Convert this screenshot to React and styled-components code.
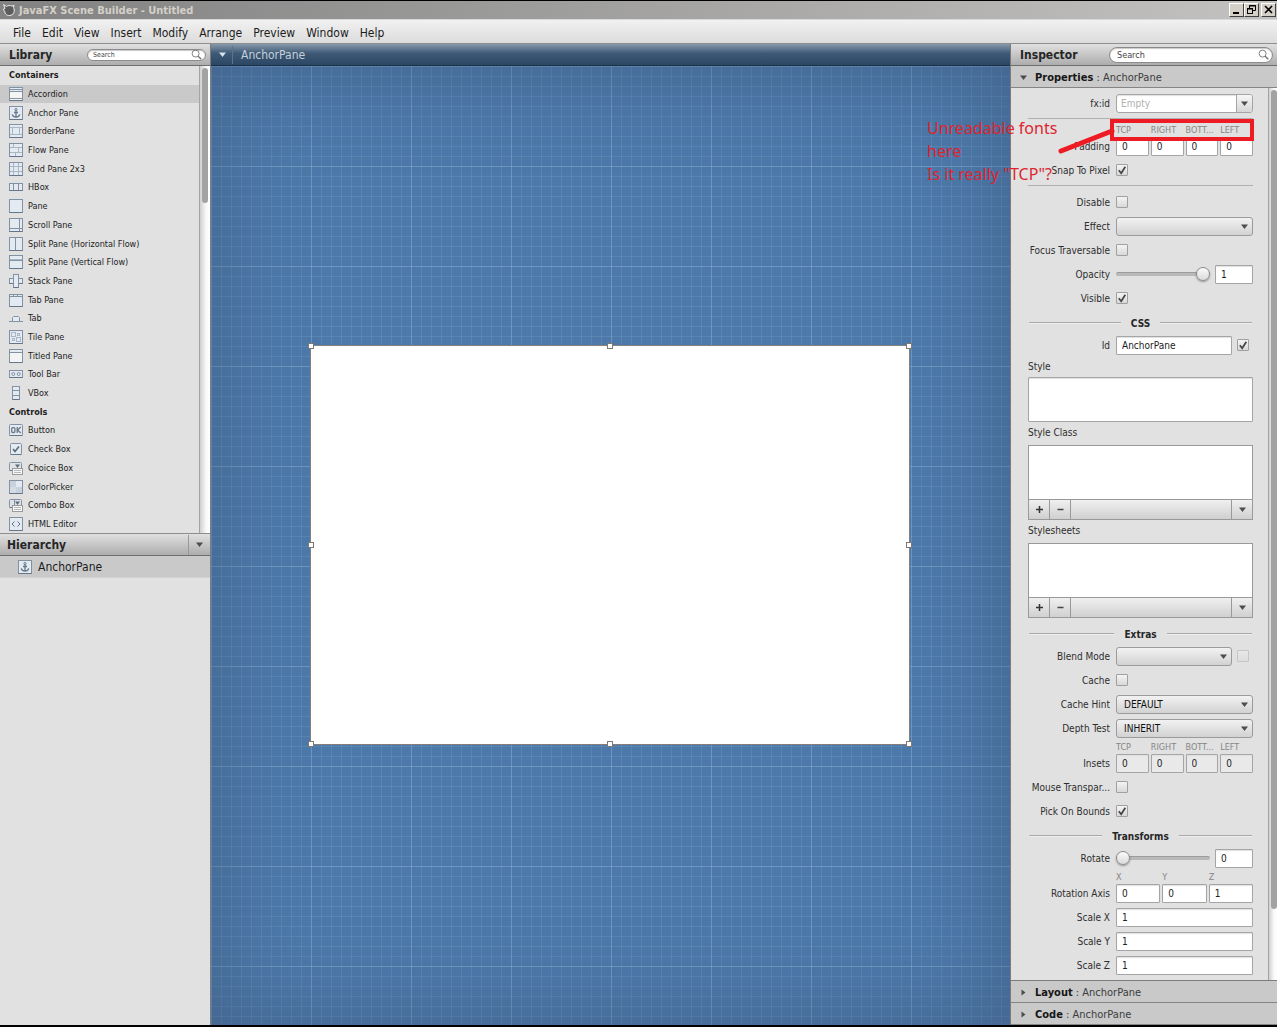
import React from "react";
import styled, { createGlobalStyle, css } from "styled-components";

const UI = `"DejaVu Sans Condensed", "Noto Sans", sans-serif`;

const GlobalStyle = createGlobalStyle`
  *, *::before, *::after { box-sizing: border-box; }
  body { margin: 0; background: #000; font-family: ${UI}; font-size: 9px; color: #1c1c1c; }
  input, select, textarea, button { font: inherit; color: inherit; margin: 0; }
  h1, h2, h3, ul { margin: 0; padding: 0; font-size: inherit; }
  ul { list-style: none; }
`;

const Window = styled.div`
  height: 100vh;
  display: flex;
  flex-direction: column;
  padding: 1px 0 2px;
  background: #000;
  overflow: hidden;
`;

const TitleBar = styled.header`
  display: flex;
  align-items: center;
  gap: 3px;
  height: 19px;
  padding: 0 1px 0 2px;
  background: linear-gradient(90deg, #828282, #c3c2c0);
  border-bottom: 1px solid #d8d8d8;
`;

const Title = styled.h1`
  flex: 1;
  font-size: 11px;
  line-height: 17px;
  color: #d4d0c8;
`;

const WindowButtons = styled.div`
  display: flex;
  button:last-child { margin-left: 2px; }
`;

const WindowButton = styled.button`
  display: flex;
  width: 15px;
  height: 14px;
  padding: 0;
  border: 1px solid;
  border-color: #fff #404040 #404040 #fff;
  background: #d4d0c8;
`;

const MenuBar = styled.nav`
  display: flex;
  align-items: center;
  gap: 1px;
  height: 24px;
  padding: 2px 8px 0;
  background: linear-gradient(#f1f1f1, #dcdcdc);
  border-bottom: 1px solid #8f8f8f;
`;

const MenuItem = styled.button`
  padding: 0 5px;
  border: 0;
  background: none;
  font-size: 12px;
  line-height: 20px;
`;

const Workspace = styled.div`
  flex: 1;
  min-height: 0;
  display: flex;
`;

const SidePanel = styled.aside`
  display: flex;
  flex-direction: column;
  width: 211px;
  background: #e1e1e1;
  border-right: 1px solid #7d7b79;
`;

const Half = styled.section`
  flex: ${(p) => p.$share} 1 0;
  min-height: 0;
  display: flex;
  flex-direction: column;
`;

const PanelHeader = styled.div`
  flex: none;
  display: flex;
  align-items: center;
  justify-content: space-between;
  height: 22px;
  padding-left: ${(p) => p.$indent}px;
  padding-right: 4px;
  background: linear-gradient(#e0e0e0, #adadad);
  border-bottom: 1px solid #6f6f6f;
`;

const PanelTitle = styled.h2`
  font-size: 12px;
  line-height: 20px;
  color: #262626;
`;

const SearchBox = styled.label`
  display: flex;
  align-items: center;
  width: ${(p) => p.$width}px;
  height: ${(p) => p.$height}px;
  padding: 0 3px 0 ${(p) => p.$inset}px;
  border: 1px solid #8b8b8b;
  border-radius: 8px;
  background: #fff;
  box-shadow: inset 0 1px 1px #c8c8c8;

  input {
    flex: 1;
    min-width: 0;
    padding: 0;
    border: 0;
    background: none;
    font-size: ${(p) => p.$font}px;
    outline: 0;
  }
  input::placeholder { color: #444; opacity: 1; }
`;

const HeaderMenu = styled.button`
  display: flex;
  align-items: center;
  justify-content: center;
  width: 21px;
  height: 20px;
  padding: 0;
  border: 0;
  border-left: 1px solid ${(p) => p.$line};
  background: none;
`;

const LibraryBody = styled.div`
  flex: 1;
  min-height: 0;
  display: flex;
`;

const LibraryList = styled.ul`
  flex: 1;
  display: grid;
  grid-auto-rows: 1fr;
`;

const LibraryHeading = styled.li`
  display: flex;
  align-items: center;
  padding-left: 9px;
  font-weight: bold;
`;

const LibraryItem = styled.li`
  display: flex;
  align-items: center;
  gap: 5px;
  min-height: 0;
  padding-left: 9px;
  background: ${(p) => (p.$selected ? "#c9c9c9" : "none")};
`;

const ScrollTrack = styled.div`
  flex: none;
  width: ${(p) => p.$width}px;
  padding: 2px 1px 0 2px;
  border-left: 1px solid #a3a3a3;
  background: linear-gradient(90deg, #cfcfcf, #f8f8f8 60%, #fff);
`;

const ScrollThumb = styled.div`
  width: 6px;
  height: ${(p) => p.$size};
  border-radius: 3px;
  background: #a2a2a2;
`;

const HierarchyHeader = styled(PanelHeader)`
  border-top: 1px solid #8d8d8d;
  height: 23px;
  padding-right: 1px;
`;

const TreeItem = styled.div`
  display: flex;
  align-items: center;
  gap: 6px;
  height: 22px;
  padding-left: 18px;
  background: #c9c9c9;
  border-bottom: 1px solid #d2d2d2;
  font-size: 12px;
`;

const grid = css`
  background-image:
    linear-gradient(90deg, rgba(150, 190, 225, 0.3) 1px, transparent 1px),
    linear-gradient(rgba(150, 190, 225, 0.3) 1px, transparent 1px),
    linear-gradient(90deg, rgba(150, 190, 225, 0.16) 1px, transparent 1px),
    linear-gradient(rgba(150, 190, 225, 0.16) 1px, transparent 1px);
  background-size: 100px 100px, 100px 100px, 10px 10px, 10px 10px;
`;

const Stage = styled.main`
  flex: 1;
  min-width: 0;
  display: flex;
  flex-direction: column;
`;

const StageBar = styled.div`
  display: flex;
  align-items: center;
  height: 22px;
  background: linear-gradient(#8799ac, #3d5976 45%, #2b4765);
  border-bottom: 1px solid #1b2f47;
`;

const Crumb = styled.span`
  padding-left: 8px;
  border-left: 1px solid #5b728b;
  font-size: 12px;
  line-height: 18px;
  color: #c6d0da;
`;

const Canvas = styled.div`
  flex: 1;
  display: flex;
  align-items: center;
  justify-content: center;
  padding: 0 1px 1px 0;
  ${grid}
  background-color: #4c79a9;
  box-shadow: inset 0 0 90px rgba(60, 80, 115, 0.55);
`;

const Scene = styled.div`
  position: relative;
  width: 600px;
  height: 400px;
  background: #fff;
  border: 1px solid #85807b;
`;

const Handle = styled.span`
  position: absolute;
  left: ${(p) => p.$x}%;
  top: ${(p) => p.$y}%;
  width: 6px;
  height: 6px;
  margin: -3px;
  border: 1px solid #7d7873;
  background: #fff;
`;

const Inspector = styled.aside`
  position: relative;
  display: flex;
  flex-direction: column;
  width: 267px;
  background: #e1e1e1;
  border-left: 1px solid #7d7b79;
`;

const AccordionHeader = styled.button`
  flex: none;
  display: flex;
  align-items: center;
  gap: 7px;
  height: 22px;
  padding: 2px 8px 0;
  border: 0;
  border-bottom: 1px solid #858585;
  background: #c9c9c9;
  font-size: 11px;
  color: #3c3c3c;
  text-align: left;

  b { color: #161616; }
`;

const ClosedSections = styled.div`
  flex: none;
  display: flex;
  flex-direction: column;
  border-top: 1px solid #7d7d7d;
`;

const InspectorBody = styled.div`
  flex: 1;
  min-height: 0;
  display: flex;
`;

const Form = styled.form`
  flex: 1;
  min-width: 0;
  padding: 3px 15px 0 17px;
  font-size: 10px;
  overflow: hidden;
`;

const Row = styled.div`
  display: grid;
  grid-template-columns: 82px minmax(0, 1fr);
  column-gap: 6px;
  align-items: center;
  height: 24px;
`;

const RowLabel = styled.label`
  text-align: right;
  white-space: nowrap;
  color: #2e2e2e;
`;

const Controls = styled.div`
  display: flex;
  align-items: center;
  gap: 5px;
`;

const field = css`
  width: 100%;
  min-width: 0;
  height: 19px;
  border: 1px solid #a5a5a5;
  border-radius: 1px;
  background: #fff;
  box-shadow: inset 0 1px 1px #e0e0e0;
  outline: 0;
`;

const TextField = styled.input`
  ${field}
  flex: ${(p) => (p.$width ? `0 0 ${p.$width}px` : 1)};
  padding: 0 5px;
  &::placeholder { color: #b3b3b3; opacity: 1; }
  &:disabled { background: #e9e9e9; color: #1c1c1c; }
`;

const ComboField = styled.div`
  ${field}
  display: flex;
  border-radius: 3px;
  overflow: hidden;

  input {
    flex: 1;
    min-width: 0;
    padding: 0 4px;
    border: 0;
    background: none;
    outline: 0;
  }
  input::placeholder { color: #b0b0b0; opacity: 1; }
  button {
    display: flex;
    align-items: center;
    justify-content: center;
    width: 16px;
    padding: 0;
    border: 0;
    border-left: 1px solid #a5a5a5;
    background: linear-gradient(#f6f6f6, #d6d6d6);
  }
`;

const SelectWrap = styled.span`
  flex: 1;
  display: grid;
  align-items: center;

  select, svg { grid-area: 1 / 1; }
  svg { justify-self: end; margin-right: 4px; pointer-events: none; }
`;

const Select = styled.select`
  appearance: none;
  width: 100%;
  height: 19px;
  padding: 0 7px;
  border: 1px solid #9b9b9b;
  border-radius: 3px;
  background: linear-gradient(#f2f2f2, #d2d2d2);
  color: #101010;
`;

const CheckWrap = styled.span`
  display: grid;
  margin: 0 4px 0 0;
  opacity: ${(p) => (p.$dim ? 0.4 : 1)};

  input, svg { grid-area: 1 / 1; }
  svg { pointer-events: none; }
`;

const CheckInput = styled.input`
  appearance: none;
  width: 12px;
  height: 12px;
  border: 1px solid #a0a0a0;
  border-radius: 1px;
  background: linear-gradient(#f4f4f4, #d8d8d8);
  & + svg { visibility: hidden; }
  &:checked + svg { visibility: visible; }
`;

const Slider = styled.input`
  appearance: none;
  flex: 1;
  min-width: 0;
  height: 16px;
  background: none;

  &::-webkit-slider-runnable-track {
    height: 4px;
    border-radius: 2px;
    border-top: 1px solid #9c9c9c;
    background: #b9b9b9;
  }
  &::-webkit-slider-thumb {
    appearance: none;
    width: 14px;
    height: 14px;
    margin-top: -6px;
    border: 1px solid #8d8d8d;
    border-radius: 50%;
    background: linear-gradient(#fafafa, #dadada);
    box-shadow: 0 1px 2px rgba(0, 0, 0, 0.35);
  }
`;

const Rule = styled.hr`
  height: 1px;
  margin: 3px 0 4px;
  border: 0;
  background: #b0b0b0;
`;

const SectionTitle = styled.h3`
  display: flex;
  align-items: center;
  gap: 10px;
  height: 23px;
  margin-top: ${(p) => p.$gap || 0}px;
  padding: 3px 1px 0;
  color: #262626;

  &::before, &::after {
    content: "";
    flex: 1;
    height: 2px;
    background: #a9a9a9;
    border-bottom: 1px solid #efefef;
  }
`;

const QuadRow = styled(Row)`
  height: 35px;
  align-items: end;
  padding-bottom: 2px;
`;

const QuadName = styled.span`
  text-align: right;
  line-height: 19px;
  color: #2e2e2e;
`;

const QuadFields = styled.div`
  display: grid;
  grid-template-columns: repeat(${(p) => p.$count}, 1fr);
  column-gap: 2px;
`;

const Caption = styled.label`
  display: flex;
  flex-direction: column;
  line-height: 14px;
  font-size: 9px;
  color: #858585;

  input { font-size: 10px; color: #1c1c1c; flex: none; }
`;

const BlockLabel = styled.label`
  display: block;
  height: ${(p) => p.$height}px;
  line-height: ${(p) => p.$height - 1}px;
  color: #2e2e2e;
`;

const StyleArea = styled.textarea`
  ${field}
  display: block;
  height: 45px;
  resize: none;
`;

const ListEditor = styled.div`
  display: flex;
  flex-direction: column;
  height: 75px;
  border: 1px solid #999;
  background: #fff;
`;

const ListItems = styled.select`
  flex: 1;
  min-height: 0;
  border: 0;
  background: #fff;
  outline: 0;
`;

const ListTools = styled.div`
  display: flex;
  height: 20px;
  border-top: 1px solid #999;
  background: linear-gradient(#f0f0f0, #d0d0d0);
`;

const ListTool = styled.button`
  display: flex;
  align-items: center;
  justify-content: center;
  width: 21px;
  padding: 0;
  border: 0;
  border-right: ${(p) => (p.$end ? 0 : "1px solid #999")};
  border-left: ${(p) => (p.$end ? "1px solid #999" : 0)};
  margin-left: ${(p) => (p.$end ? "auto" : 0)};
  background: none;
`;

const Note = styled.p`
  position: absolute;
  z-index: 2;
  top: 73px;
  left: -84px;
  margin: 0;
  width: 150px;
  font-family: "Noto Sans", "Open Sans", sans-serif;
  font-size: 16px;
  line-height: 23px;
  color: #dd2530;
  pointer-events: none;
`;

const Marker = styled.svg`
  position: absolute;
  z-index: 1;
  top: 74px;
  left: 43px;
  pointer-events: none;
`;

const Arrow = ({ color = "#4c4c4c", right, ...rest }) => (
  <svg width="9" height="9" viewBox="0 0 9 9" aria-hidden="true" {...rest}>
    <path d={right ? "M2.5 1.5v6l4-3z" : "M1 2.5h7L4.5 7z"} fill={color} />
  </svg>
);

const Magnifier = ({ size }) => (
  <svg width={size} height={size} viewBox="0 0 12 12" fill="none" stroke="#777" aria-hidden="true">
    <circle cx="5" cy="5" r="3.8" />
    <path d="M7.8 7.8l3.4 3.4" strokeWidth="1.6" />
  </svg>
);

const LINE = "#a9b6c4";
const EDGE = "#8392a3";
const FILL = "#e3eaf2";

const Frame = ({ x = 0.5, y = 0.5, w = 13, h = 13, fill = FILL, r = 0 }) => (
  <>
    <rect x={x} y={y} width={w} height={h} rx={r} fill={fill} stroke={EDGE} />
    <path d={`M${x} ${y + h}h${w}`} stroke="#66768a" />
  </>
);
const Lines = ({ d, color = LINE }) => <path d={d} stroke={color} fill="none" />;
const DropGlyph = ({ divided }) => (
  <>
    <Frame y={1.5} w={12} h={8} r={1} fill="#dfe3e8" />
    {divided && <Lines d="M5.5 1.5v8" color={EDGE} />}
    <path d="M6 3.5h5L8.5 7z" fill="#5f6c7a" />
    <rect x="3.5" y="7.5" width="10" height="6" fill="#f7f7f7" stroke="#9a9a9a" />
    <Lines d="M5 9.5h7M5 11.5h7" color="#b8b8b8" />
  </>
);

const GLYPHS = {
  accordion: <><Frame fill="#f5f5f3" /><rect x="1" y="1" width="12" height="3" fill={FILL} /><Lines d="M1 2.5h12M1 4.5h12M1 11.5h12" color={EDGE} /></>,
  anchor: <><Frame /><circle cx="7" cy="3.6" r="1.1" fill="none" stroke="#66788b" /><path d="M7 4.7V11M5 6.5h4M3.3 8.3c.5 2 2 2.7 3.7 2.7s3.2-.7 3.7-2.7" fill="none" stroke="#66788b" strokeWidth="1.3" /></>,
  border: <><Frame /><Lines d="M1 3.5h12M1 10.5h12M3.5 3.5v7M10.5 3.5v7" /></>,
  flow: <><Frame /><Lines d="M1 4.5h12M1 9.5h12M4.5 1v3.5M9.5 4.5v5M6.5 9.5V13" /></>,
  grid: <><Frame /><Lines d="M4.5 1v12M9.5 1v12M1 4.5h12M1 9.5h12" /></>,
  hbox: <><Frame y={3.5} h={7} /><Lines d="M4.5 4v6M9.5 4v6" color={EDGE} /></>,
  pane: <Frame />,
  scroll: <><Frame /><Lines d="M10.5 1v12M1 10.5h12" color={EDGE} /></>,
  splitH: <><Frame /><Lines d="M6.5 1v12" color={EDGE} /></>,
  splitV: <><Frame /><Lines d="M1 5.5h12" color={EDGE} /><Lines d="M1 4.5h12" /></>,
  stack: <><Frame y={4.5} h={5} /><Frame x={4.5} w={5} /></>,
  tabPane: <><Frame y={1.5} h={12} /><Lines d="M1 3.5h12M4.5 1v2M8.5 1v2" color={EDGE} /></>,
  tab: <><path d="M3.5 10V6.5l1-1h5l1 1V10" fill={FILL} stroke={EDGE} /><Lines d="M0 10.5h14" color={EDGE} /></>,
  tile: <><Frame /><g fill="none" stroke={LINE}><rect x="2.5" y="2.5" width="4" height="4" /><rect x="8.5" y="3.5" width="2" height="2" /><rect x="3.5" y="8.5" width="2" height="2" /><rect x="7.5" y="7.5" width="4" height="4" /></g></>,
  titled: <><Frame fill="#f4f4f4" /><rect x="1" y="1" width="12" height="2" fill={FILL} /><Lines d="M1 3.5h12" color={EDGE} /></>,
  toolbar: <><Frame y={3.5} h={7} /><g fill="none" stroke={EDGE}><circle cx="4.3" cy="7" r="1.5" /><circle cx="9.7" cy="7" r="1.5" /></g></>,
  vbox: <><Frame x={3.5} w={7} /><Lines d="M4 4.5h6M4 9.5h6" color={EDGE} /></>,
  button: <><Frame y={1.5} h={11} r={1} /><g fill="none" stroke="#6c7886" strokeWidth="1.3"><rect x="2.7" y="4.7" width="3.2" height="4.8" rx="1" /><path d="M8.2 4v6M11.7 4L8.6 7l3.1 3" /></g></>,
  check: <><Frame x={1.5} y={1.5} w={11} h={11} r={1} /><path d="M4 7l2 2.5L10 4.5" fill="none" stroke="#5d6b7a" strokeWidth="1.6" /></>,
  choice: <DropGlyph />,
  color: <><Frame /><path d="M1 1h6v6H1zM7 7h6v6H7z" fill="#c8d2dd" /><path d="M1 7h6v6H1z" fill="#d5dce4" /></>,
  combo: <DropGlyph divided />,
  html: <><Frame /><path d="M5.5 4.5L3 7l2.5 2.5M8.5 4.5L11 7l-2.5 2.5" fill="none" stroke="#5d7186" /></>,
};

const Glyph = ({ name }) => (
  <svg width="14" height="14" viewBox="0 0 14 14" aria-hidden="true">{GLYPHS[name]}</svg>
);

const CONTAINERS = [
  ["accordion", "Accordion"], ["anchor", "Anchor Pane"], ["border", "BorderPane"],
  ["flow", "Flow Pane"], ["grid", "Grid Pane 2x3"], ["hbox", "HBox"], ["pane", "Pane"],
  ["scroll", "Scroll Pane"], ["splitH", "Split Pane (Horizontal Flow)"],
  ["splitV", "Split Pane (Vertical Flow)"], ["stack", "Stack Pane"], ["tabPane", "Tab Pane"],
  ["tab", "Tab"], ["tile", "Tile Pane"], ["titled", "Titled Pane"], ["toolbar", "Tool Bar"],
  ["vbox", "VBox"],
];
const CONTROLS = [
  ["button", "Button"], ["check", "Check Box"], ["choice", "Choice Box"],
  ["color", "ColorPicker"], ["combo", "Combo Box"], ["html", "HTML Editor"],
];
const MENUS = ["File", "Edit", "View", "Insert", "Modify", "Arrange", "Preview", "Window", "Help"];
const HANDLES = [[0, 0], [50, 0], [100, 0], [0, 50], [100, 50], [0, 100], [50, 100], [100, 100]];
const SIDES = ["TCP", "RIGHT", "BOTT...", "LEFT"];

const Check = ({ dim, ...props }) => (
  <CheckWrap $dim={dim}>
    <CheckInput type="checkbox" disabled={dim} {...props} />
    <svg width="12" height="12" viewBox="0 0 12 12" aria-hidden="true">
      <path d="M2.8 6.2l2.4 3L9.3 2.8" fill="none" stroke="#444" strokeWidth="1.7" />
    </svg>
  </CheckWrap>
);

const Field = ({ id, label, children }) => (
  <Row>
    <RowLabel htmlFor={id}>{label}</RowLabel>
    <Controls>{children}</Controls>
  </Row>
);

const CheckRow = ({ id, label, on }) => (
  <Field id={id} label={label}><Check id={id} defaultChecked={on} /></Field>
);

const Choice = ({ id, value = "" }) => (
  <SelectWrap>
    <Select id={id} defaultValue={value}><option>{value}</option></Select>
    <Arrow />
  </SelectWrap>
);

const Quad = ({ name, captions, values, disabled }) => (
  <QuadRow role="group" aria-label={name}>
    <QuadName>{name}</QuadName>
    <QuadFields $count={captions.length}>
      {captions.map((c, i) => (
        <Caption key={c}>{c}<TextField defaultValue={values[i]} disabled={disabled} /></Caption>
      ))}
    </QuadFields>
  </QuadRow>
);

const ListField = ({ id, label }) => (
  <>
    <BlockLabel htmlFor={id} $height={23}>{label}</BlockLabel>
    <ListEditor>
      <ListItems id={id} size={4} />
      <ListTools>
        <ListTool type="button" aria-label="Add">
          <svg width="7" height="7" viewBox="0 0 7 7"><path d="M3.5 0v7M0 3.5h7" stroke="#333" strokeWidth="1.5" /></svg>
        </ListTool>
        <ListTool type="button" aria-label="Remove">
          <svg width="7" height="7" viewBox="0 0 7 7"><path d="M0.5 3.5h6" stroke="#444" strokeWidth="1.5" /></svg>
        </ListTool>
        <ListTool type="button" aria-label="More" $end><Arrow /></ListTool>
      </ListTools>
    </ListEditor>
  </>
);

export default function App() {
  return (
    <Window>
      <GlobalStyle />
      <TitleBar>
        <svg width="14" height="14" viewBox="0 0 14 14" aria-hidden="true">
          <path d="M1.5 1.5l3 2c1.5-1.2 4-1.3 5.500-.3l2-1-.5 2.500c1.600 3 .6 6.500-2.500 7.500-3.500 1.200-6.300-1-6.300-4.200L1 6.500l2-1z" fill="#5c5c5c" stroke="#eee" />
        </svg>
        <Title>JavaFX Scene Builder - Untitled</Title>
        <WindowButtons>
          <WindowButton aria-label="Minimize"><svg width="13" height="12"><path d="M3 9h6" stroke="#000" strokeWidth="2" /></svg></WindowButton>
          <WindowButton aria-label="Restore"><svg width="13" height="12" fill="none" stroke="#000"><path d="M4.5 4V1.5h6v5H8M4 2h7M2 5h6" /><rect x="2.5" y="4.5" width="5" height="5" /></svg></WindowButton>
          <WindowButton aria-label="Close"><svg width="13" height="12"><path d="M3 2l7 7M10 2l-7 7" stroke="#000" strokeWidth="1.6" /></svg></WindowButton>
        </WindowButtons>
      </TitleBar>
      <MenuBar>{MENUS.map((m) => <MenuItem key={m}>{m}</MenuItem>)}</MenuBar>
      <Workspace>
        <SidePanel>
          <Half $share={199}>
            <PanelHeader $indent={9}>
              <PanelTitle>Library</PanelTitle>
              <SearchBox $width={119} $height={12} $font={7} $inset={5}>
                <input placeholder="Search" aria-label="Search library" />
                <Magnifier size={11} />
              </SearchBox>
            </PanelHeader>
            <LibraryBody>
              <LibraryList>
                <LibraryHeading>Containers</LibraryHeading>
                {CONTAINERS.map(([icon, name], i) => (
                  <LibraryItem key={name} $selected={i === 0}><Glyph name={icon} />{name}</LibraryItem>
                ))}
                <LibraryHeading>Controls</LibraryHeading>
                {CONTROLS.map(([icon, name]) => (
                  <LibraryItem key={name}><Glyph name={icon} />{name}</LibraryItem>
                ))}
              </LibraryList>
              <ScrollTrack $width={11}><ScrollThumb $size="29%" /></ScrollTrack>
            </LibraryBody>
          </Half>
          <Half $share={200}>
            <HierarchyHeader $indent={7}>
              <PanelTitle>Hierarchy</PanelTitle>
              <HeaderMenu $line="#999" aria-label="Hierarchy menu"><Arrow /></HeaderMenu>
            </HierarchyHeader>
            <TreeItem><Glyph name="anchor" />AnchorPane</TreeItem>
          </Half>
        </SidePanel>

        <Stage>
          <StageBar>
            <HeaderMenu $line="transparent" aria-label="Document menu"><Arrow color="#dbe2e9" /></HeaderMenu>
            <Crumb>AnchorPane</Crumb>
          </StageBar>
          <Canvas>
            <Scene>
              {HANDLES.map(([x, y]) => <Handle key={`${x}-${y}`} $x={x} $y={y} />)}
            </Scene>
          </Canvas>
        </Stage>

        <Inspector>
          <PanelHeader $indent={9}>
            <PanelTitle>Inspector</PanelTitle>
            <SearchBox $width={164} $height={16} $font={9} $inset={7}>
              <input placeholder="Search" aria-label="Search inspector" />
              <Magnifier size={11} />
            </SearchBox>
          </PanelHeader>
          <AccordionHeader><Arrow /><span><b>Properties</b> : AnchorPane</span></AccordionHeader>
          <InspectorBody>
            <Form>
              <Field id="fxid" label="fx:id">
                <ComboField>
                  <input id="fxid" placeholder="Empty" />
                  <button type="button" aria-label="Show ids"><Arrow /></button>
                </ComboField>
              </Field>
              <Rule />
              <Quad name="Padding" captions={SIDES} values={[0, 0, 0, 0]} />
              <CheckRow id="snap" label="Snap To Pixel" on />
              <Rule />
              <CheckRow id="disable" label="Disable" />
              <Field id="effect" label="Effect"><Choice id="effect" /></Field>
              <CheckRow id="focus" label="Focus Traversable" />
              <Field id="opacity" label="Opacity">
                <Slider id="opacity" type="range" min="0" max="1" step="0.01" defaultValue="1" />
                <TextField $width={38} defaultValue="1" aria-label="Opacity value" />
              </Field>
              <CheckRow id="visible" label="Visible" on />
              <SectionTitle>CSS</SectionTitle>
              <Field id="cssid" label="Id">
                <TextField id="cssid" defaultValue="AnchorPane" />
                <Check defaultChecked aria-label="Same as fx:id" />
              </Field>
              <BlockLabel htmlFor="style" $height={20}>Style</BlockLabel>
              <StyleArea id="style" />
              <ListField id="styleClass" label="Style Class" />
              <ListField id="stylesheets" label="Stylesheets" />
              <SectionTitle $gap={3}>Extras</SectionTitle>
              <Field id="blend" label="Blend Mode">
                <Choice id="blend" />
                <Check dim aria-label="Default blend mode" />
              </Field>
              <CheckRow id="cache" label="Cache" />
              <Field id="hint" label="Cache Hint"><Choice id="hint" value="DEFAULT" /></Field>
              <Field id="depth" label="Depth Test"><Choice id="depth" value="INHERIT" /></Field>
              <Quad name="Insets" captions={SIDES} values={[0, 0, 0, 0]} disabled />
              <CheckRow id="mouse" label="Mouse Transpar..." />
              <CheckRow id="pick" label="Pick On Bounds" on />
              <SectionTitle>Transforms</SectionTitle>
              <Field id="rotate" label="Rotate">
                <Slider id="rotate" type="range" min="0" max="360" defaultValue="0" />
                <TextField $width={38} defaultValue="0" aria-label="Rotate value" />
              </Field>
              <Quad name="Rotation Axis" captions={["X", "Y", "Z"]} values={[0, 0, 1]} />
              {["X", "Y", "Z"].map((axis) => (
                <Field key={axis} id={`scale${axis}`} label={`Scale ${axis}`}>
                  <TextField id={`scale${axis}`} defaultValue="1" />
                </Field>
              ))}
            </Form>
            <ScrollTrack $width={9}><ScrollThumb $size="92%" /></ScrollTrack>
          </InspectorBody>
          <ClosedSections>
            <AccordionHeader><Arrow right /><span><b>Layout</b> : AnchorPane</span></AccordionHeader>
            <AccordionHeader><Arrow right /><span><b>Code</b> : AnchorPane</span></AccordionHeader>
          </ClosedSections>
          <Note>Unreadable fonts<br />here<br />Is it really "TCP"?</Note>
          <Marker width="202" height="36" viewBox="0 0 202 36" fill="none" stroke="#ed1c24" aria-hidden="true">
            <rect x="58" y="3" width="140" height="18" strokeWidth="4" />
            <path d="M7 33L58 13" strokeWidth="5" strokeLinecap="round" />
          </Marker>
        </Inspector>
      </Workspace>
    </Window>
  );
}
